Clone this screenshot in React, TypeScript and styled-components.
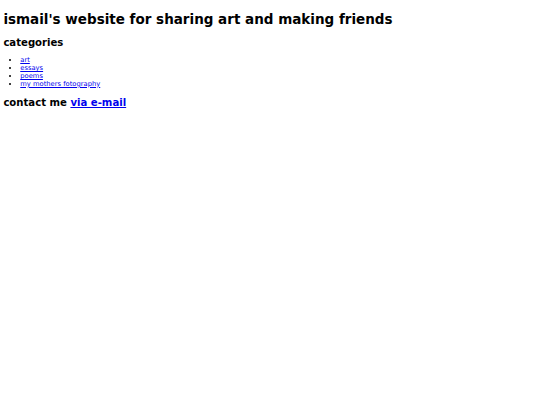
import styled, { createGlobalStyle } from 'styled-components';

// the reference is a plain default-styled page shot at 1280px and scaled down to 540px
const SCALE = 540 / 1280;

const GlobalStyle = createGlobalStyle`
    html, body {
        background: #ffffff;
    }
    body {
        margin: ${8 * SCALE}px;
        font-family: 'DejaVu Sans', 'Liberation Sans', sans-serif;
        font-size: ${16 * SCALE}px;
        line-height: 1.164;
        color: #000000;
    }
`;

export default function App() {
    const CATEGORIES = ['art', 'essays', 'poems', 'my mothers fotography'];
    return (
        <>
            <GlobalStyle />
            <Page>
                <Title>ismail's website for sharing art and making friends</Title>
                <SectionHeading>categories</SectionHeading>
                <CategoryList>
                    {CATEGORIES.map((item, index) => {
                        return (
                            <CategoryItem key={index}>
                                <TextLink href='#'>{item}</TextLink>
                            </CategoryItem>
                        );
                    })}
                </CategoryList>
                <SectionHeading>
                    contact me <TextLink href='#'>via e-mail</TextLink>
                </SectionHeading>
            </Page>
        </>
    );
}

export const Page = styled.main`
    display: block;
`;

export const Title = styled.h1`
    font-size: 2em;
    font-weight: bold;
    line-height: 1.164;
    margin: 0.67em 0;
`;

export const SectionHeading = styled.h2`
    font-size: 1.5em;
    font-weight: bold;
    line-height: 1.164;
    margin: 0.83em 0;
`;

export const CategoryList = styled.ul`
    list-style: disc;
    margin: 1em 0;
    padding-left: ${40 * SCALE}px;
`;

export const CategoryItem = styled.li`
    line-height: 1.164;
`;

export const TextLink = styled.a`
    color: #0000ee;
    text-decoration: underline;
`;
